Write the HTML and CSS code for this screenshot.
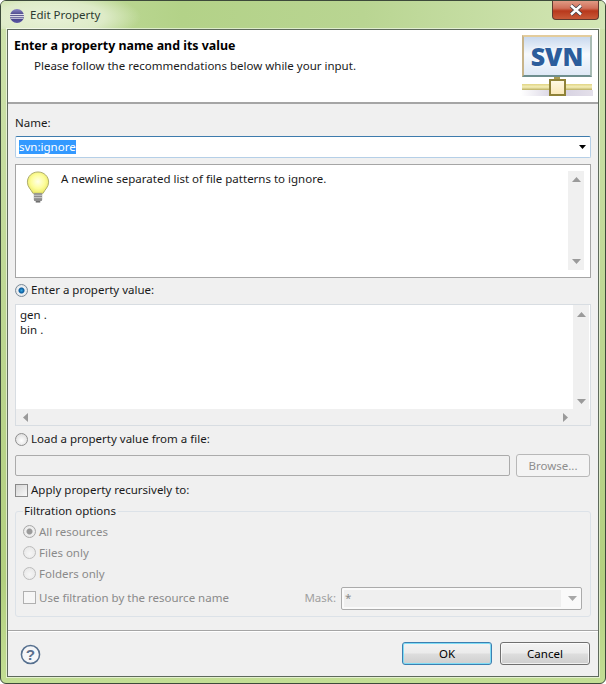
FILE: index.html
```html
<!DOCTYPE html>
<html lang="en">
<head>
<meta charset="utf-8">
<title>Edit Property</title>
<link rel="stylesheet" href="styles.css">
</head>
<body>
<div class="window">
  <div class="titlebar">
    <svg class="app-icon" width="16" height="16" viewBox="0 0 16 16">
      <defs><linearGradient id="ec" x1="0" y1="0" x2="0" y2="1"><stop offset="0" stop-color="#8a86c8"/><stop offset=".5" stop-color="#3a3878"/><stop offset="1" stop-color="#5d58a8"/></linearGradient></defs>
      <circle cx="8" cy="8" r="7" fill="url(#ec)"/>
      <path d="M1 6.600h14M1 8.400h14M1.600 10.200h12.800" stroke="#fff" stroke-width=".9"/>
    </svg>
    <span class="title">Edit Property</span>
    <div class="close">
      <svg width="16" height="12" viewBox="0 0 16 12"><path d="M3 1.500l10 9M13 1.500l-10 9" stroke="#3c4048" stroke-width="4"/><path d="M3 1.500l10 9M13 1.500l-10 9" stroke="#fff" stroke-width="2.400"/></svg>
    </div>
  </div>
  <div class="client">
    <div class="banner">
      <div class="banner-text">
        <div class="banner-title">Enter a property name and its value</div>
        <div class="banner-sub">Please follow the recommendations below while your input.</div>
      </div>
      <div class="logo">
        <div class="logo-screen"><span class="logo-text">SVN</span></div>
        <div class="logo-stem"></div>
        <div class="logo-bus"><div class="logo-node"></div></div>
        <div class="logo-shadow"></div>
      </div>
    </div>
    <div class="body">
      <div class="label name-label">Name:</div>
      <div class="combo">
        <span class="selected">svn:ignore</span>
        <svg class="combo-arrow" width="7" height="4" viewBox="0 0 7 4"><path d="M0 0h7L3.500 4z" fill="#000"/></svg>
      </div>
      <div class="desc">
        <svg class="bulb" width="24" height="32" viewBox="0 0 26 33" preserveAspectRatio="none">
          <defs><radialGradient id="bl" cx=".5" cy=".45" r=".55"><stop offset="0" stop-color="#ffffe8"/><stop offset=".6" stop-color="#fdfd9a"/><stop offset="1" stop-color="#ecea68"/></radialGradient></defs>
          <path d="M13 1C6.500 1 1.500 5.500 1.500 11.500c0 5 4 7.500 6 11.500h11c2-4 6-6.500 6-11.500C24.500 5.500 19.500 1 13 1z" fill="url(#bl)" stroke="#a9a86a"/>
          <rect x="8.500" y="23" width="9" height="8" rx="1" fill="#8d8d8d"/>
          <path d="M8.500 25h9M8.500 27.500h9" stroke="#d2d2d2"/>
          <rect x="10.500" y="31" width="5" height="1.500" fill="#666"/>
        </svg>
        <div class="desc-text">A newline separated list of file patterns to ignore.</div>
        <div class="vscroll">
          <svg width="9" height="5" viewBox="0 0 9 5"><path d="M0 5L4.500 0 9 5z" fill="#9a9a9a"/></svg>
          <svg width="9" height="5" viewBox="0 0 9 5"><path d="M0 0h9L4.500 5z" fill="#9a9a9a"/></svg>
        </div>
      </div>
      <div class="option first-option">
        <span class="radio checked"></span>
        <span>Enter a property value:</span>
      </div>
      <div class="editor">
        <div class="editor-main">
          <div class="editor-text">gen .<br>bin .</div>
          <div class="vscroll">
            <svg width="9" height="5" viewBox="0 0 9 5"><path d="M0 5L4.500 0 9 5z" fill="#9a9a9a"/></svg>
            <svg width="9" height="5" viewBox="0 0 9 5"><path d="M0 0h9L4.500 5z" fill="#9a9a9a"/></svg>
          </div>
        </div>
        <div class="hscroll">
          <svg width="5" height="9" viewBox="0 0 5 9"><path d="M5 0L0 4.500 5 9z" fill="#9a9a9a"/></svg>
          <svg width="5" height="9" viewBox="0 0 5 9"><path d="M0 0l5 4.500L0 9z" fill="#9a9a9a"/></svg>
        </div>
      </div>
      <div class="option second-option">
        <span class="radio"></span>
        <span>Load a property value from a file:</span>
      </div>
      <div class="file-row">
        <div class="file-input"></div>
        <div class="browse">Browse...</div>
      </div>
      <div class="option check-option">
        <span class="check"></span>
        <span>Apply property recursively to:</span>
      </div>
      <fieldset class="group">
        <legend class="legend">Filtration options</legend>
        <div class="option sub"><span class="radio dim checked-dim"></span><span>All resources</span></div>
        <div class="option sub"><span class="radio dim"></span><span>Files only</span></div>
        <div class="option sub"><span class="radio dim"></span><span>Folders only</span></div>
        <div class="mask-row">
          <span class="check dim-check"></span>
          <span class="mask-use">Use filtration by the resource name</span>
          <span class="mask-label">Mask:</span>
          <div class="mask-combo">
            <div class="mask-value">*</div>
            <svg width="9" height="5" viewBox="0 0 9 5"><path d="M0 0h9L4.500 5z" fill="#a8a8a8"/></svg>
          </div>
        </div>
      </fieldset>
    </div>
    <div class="footer">
      <svg class="help" width="21" height="21" viewBox="0 0 22 22">
        <circle cx="11" cy="11" r="9.500" fill="#f5f6f8" stroke="#56708f" stroke-width="1.600"/>
        <text x="11" y="16.500" text-anchor="middle" class="help-mark">?</text>
      </svg>
      <div class="buttons">
        <div class="btn default">OK</div>
        <div class="btn">Cancel</div>
      </div>
    </div>
  </div>
</div>
</body>
</html>
```
FILE: styles.css
```css
* { box-sizing: border-box; }
html, body { margin: 0; padding: 0; }
body {
  width: 606px;
  height: 684px;
  overflow: hidden;
  background: #fff;
  font-family: "Noto Sans", "Open Sans", sans-serif;
  font-size: 11.5px;
  line-height: 16px;
  color: #1a1a1a;
}
.window {
  width: 606px;
  height: 684px;
  border: 1px solid #3d4a3a;
  border-radius: 6px;
  overflow: hidden;
  background: linear-gradient(#cfe3ad 0, #bcd690 50%, #b3d07f 85%, #c3de94 100%);
  padding: 0 6px 6px 6px;
  display: flex;
  flex-direction: column;
}
.titlebar {
  height: 28px;
  flex: none;
  margin: 0 -6px;
  padding: 6px 6px 0 8px;
  display: flex;
  align-items: flex-start;
  gap: 5px;
  background:
    radial-gradient(ellipse 90px 26px at 50px 16px, #e8f1d8 0, rgba(232,241,216,.75) 60%, rgba(232,241,216,0) 100%),
    linear-gradient(90deg, #c6dea0 0, #b3d288 30%, #b9d592 60%, #d3e6b5 100%);
}
.app-icon { margin-top: 1px; }
.title { color: #2b3a30; line-height: 16px; flex: 1; }
.close {
  width: 47px;
  height: 19px;
  margin-top: -6px;
  border: 1px solid #5d3a30;
  border-top: 0;
  border-radius: 0 0 4px 4px;
  background: linear-gradient(#e09a84 0, #d0705a 40%, #b8381c 55%, #c85a38 100%);
  display: flex;
  align-items: center;
  justify-content: center;
}
.client {
  flex: 1;
  border: 1px solid #5e6a5c;
  background: #f0f0f0;
  box-shadow: 0 0 0 1px rgba(255,255,255,.55);
  display: flex;
  flex-direction: column;
  min-height: 0;
}
.banner {
  height: 74px;
  flex: none;
  background: #fff;
  border-bottom: 2px solid #a5a5a5;
  display: flex;
  justify-content: space-between;
}
.banner-text { padding: 7px 0 0 6px; }
.banner-title { font-weight: 700; font-size: 12.4px; color: #000; line-height: 18px; }
.banner-sub { padding-left: 20px; line-height: 21px; }
.logo { width: 72px; padding-top: 5px; margin-right: 5px; display: flex; flex-direction: column; align-items: center; }
.logo-screen {
  width: 70px;
  height: 42px;
  flex: none;
  border: 2px solid;
  border-color: #e3cc9c #a9bcb4 #6f8f8f #c8b48a;
  background: linear-gradient(#c9d9ee, #f6f9fd 45%, #dfe9f6);
  display: flex;
  align-items: center;
  justify-content: center;
}
.logo-text {
  font-family: "Open Sans", sans-serif;
  font-weight: 800;
  font-size: 25px;
  line-height: 26px;
  color: #2c5d9c;
  text-shadow: 0 0 3px #fff;
}
.logo-stem { width: 6px; height: 7px; flex: none; background: #a89a50; }
.logo-bus {
  width: 70px;
  height: 6px;
  flex: none;
  background: linear-gradient(#e0d484, #f4eeb8 50%, #bcb060);
  position: relative;
  display: flex;
  justify-content: center;
}
.logo-node {
  position: absolute;
  top: -5px;
  width: 17px;
  height: 17px;
  border: 2px solid #8f8238;
  background: linear-gradient(#fff9e4, #fbe9ba);
}
.logo-shadow { width: 72px; height: 6px; flex: none; background: linear-gradient(90deg, #fff, #d4cfe0 50%, #e4e0ea); }
.body { flex: 1; padding: 11px 7px 0 7px; display: flex; flex-direction: column; min-height: 0; }
.label { line-height: 16px; }
.name-label { height: 21px; flex: none; }
.combo {
  height: 22px;
  flex: none;
  border: 1px solid;
  border-color: #3d7bad #b5cfe7 #b5cfe7 #b5cfe7;
  border-radius: 2px;
  background: #fff;
  padding: 0 4px 0 3px;
  display: flex;
  align-items: center;
  justify-content: space-between;
}
.selected { background: #3399ff; color: #fff; line-height: 14px; }
.desc {
  height: 114px;
  flex: none;
  margin-top: 6px;
  border: 1px solid #a5a5a5;
  background: #fff;
  padding: 0 6px 0 10px;
  display: flex;
}
.bulb { margin-top: 6px; flex: none; }
.desc-text { flex: 1; padding: 5px 0 0 11px; line-height: 18px; }
.vscroll {
  width: 16px;
  flex: none;
  margin: 6px 0 7px;
  background: #f0f0f0;
  display: flex;
  flex-direction: column;
  justify-content: space-between;
  align-items: center;
  padding: 6px 0;
}
.option { display: flex; align-items: center; gap: 3px; line-height: 16px; flex: none; }
.first-option { height: 14px; margin-top: 5px; }
.second-option { height: 14px; margin-top: 6px; }
.check-option { height: 16px; margin-top: 5px; }
.radio {
  width: 13px;
  height: 13px;
  flex: none;
  border: 1px solid #8f8f8f;
  border-radius: 50%;
  background: radial-gradient(circle at 50% 60%, #fff, #d6d6d6);
}
.radio.checked { background: radial-gradient(circle, #35a6e0 0, #0a5a9c 2.500px, #eef1f4 3.500px, #dcdcdc 100%); border-color: #7a8a98; }
.editor {
  height: 122px;
  flex: none;
  margin-top: 7px;
  border: 1px solid #d8dde2;
  background: #f0f0f0;
  display: flex;
  flex-direction: column;
}
.editor-main { flex: 1; display: flex; background: #fff; min-height: 0; padding-right: 1px; }
.editor-text { flex: 1; padding: 2px 0 0 4px; line-height: 15px; }
.editor-main .vscroll { margin: 0; padding: 7px 0 5px; }
.hscroll {
  height: 16px;
  flex: none;
  padding: 0 22px 0 7px;
  display: flex;
  align-items: center;
  justify-content: space-between;
}
.file-row { margin: 8px 1px 0 0; display: flex; gap: 6px; height: 23px; flex: none; }
.file-input {
  flex: 1;
  margin: 1px 0;
  border: 1px solid #ababab;
  border-radius: 2px;
  background: #f0f0f0;
}
.browse {
  width: 74px;
  border: 1px solid #b8b8b8;
  border-radius: 3px;
  background: #f4f4f4;
  color: #8e8e8e;
  display: flex;
  align-items: center;
  justify-content: center;
}
.check {
  width: 13px;
  height: 13px;
  flex: none;
  border: 1px solid #8a8a8a;
  background: linear-gradient(135deg, #d6d6d6, #f8f8f8);
}
.group {
  margin: 5px 0 0 0;
  min-width: 0;
  height: 114px;
  flex: none;
  padding: 0 7px;
  border: 1px solid #dce2e8;
  border-radius: 3px;
  display: flex;
  flex-direction: column;
}
.legend { padding: 0 2px 0 1px; color: #1a1a1a; line-height: 16px; height: 16px; }
.option.sub { height: 21px; color: #8a8a8a; }
.radio.dim { border-color: #bcbcbc; background: radial-gradient(circle at 50% 60%, #f6f6f6, #e4e4e4); }
.radio.checked-dim { background: radial-gradient(circle, #9a9a9a 0, #9a9a9a 2.500px, #efefef 3.500px, #e4e4e4 100%); border-color: #a8a8a8; }
.group .legend + .option.sub { margin-top: 2px; }
.mask-row { display: flex; align-items: center; height: 23px; margin-top: 3px; color: #8a8a8a; flex: none; }
.dim-check { border-color: #b0b0b0; background: #f6f6f6; margin-bottom: 2px; }
.mask-use { margin-left: 3px; flex: 1; padding-bottom: 2px; }
.mask-label { margin-right: 5px; color: #a0a0a0; padding-bottom: 2px; }
.mask-combo {
  width: 241px;
  height: 23px;
  flex: none;
  border: 1px solid #ababab;
  border-radius: 2px;
  background: #fafafa;
  padding: 2px 4px 2px 2px;
  display: flex;
  align-items: center;
  gap: 7px;
  margin-right: 1px;
}
.mask-value { flex: 1; height: 17px; background: #efefef; line-height: 15px; padding-left: 1px; color: #8a8a8a; }
.footer {
  height: 46px;
  flex: none;
  border-top: 1px solid #a5a5a5;
  box-shadow: inset 0 1px 0 #fff;
  padding: 11px 8px 0 12px;
  display: flex;
  justify-content: space-between;
}
.help { margin-top: 2px; }
.help-mark { font-family: "Liberation Sans", sans-serif; font-weight: 700; font-size: 16px; fill: #5a6f8c; }
.buttons { display: flex; gap: 8px; }
.btn {
  width: 90px;
  height: 23px;
  border: 1px solid #707070;
  border-radius: 3px;
  background: linear-gradient(#f3f3f3 0, #ebebeb 48%, #dddddd 52%, #cfcfcf 100%);
  color: #000;
  display: flex;
  align-items: center;
  justify-content: center;
  box-shadow: inset 0 0 0 1px rgba(255,255,255,.7);
}
.btn.default { border-color: #3c7fb1; box-shadow: inset 0 0 0 1px #7fdcf5; }
```
